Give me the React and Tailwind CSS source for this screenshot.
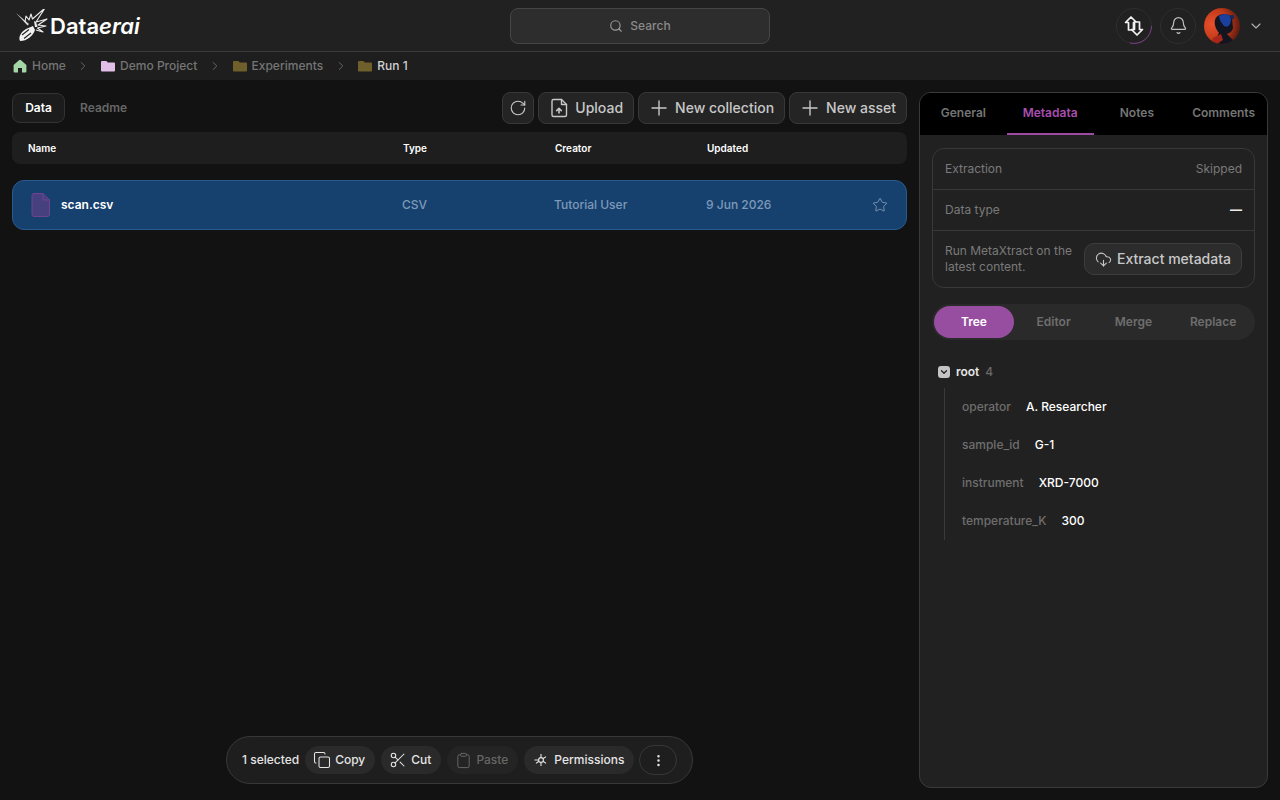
import {
  Bell,
  ChevronDown,
  ChevronRight,
  Clipboard,
  CloudDownload,
  Copy,
  EllipsisVertical,
  Plus,
  RotateCw,
  Scissors,
  Search,
  Star,
} from "lucide-react";

function Logo() {
  return (
    <svg width="34" height="34" viewBox="0 0 34 34" fill="none" className="shrink-0">
      <path d="M0 4 L13 15 L11.5 16.5 Z" fill="#d8d8d8" />
      <path d="M9 13 L10 7 L13 11 L15 5 L16.5 10 L29 -1 L20 13 L31 10 L22 16 L30 17 L21.5 19 L27 23 L20 21" stroke="#ededed" strokeWidth="1.1" strokeLinejoin="round" />
      <path d="M18 12 L20 13 L21.5 18 L19 18 Z" fill="#ededed" />
      <path d="M4 32 C2 28 5 23 10 20 L17 17 L19 21 C17 27 11 32 4 32 Z" fill="#f0f0f0" />
      <path d="M6 26 L13 20.5 M8 29.5 L15 24" stroke="#212121" strokeWidth="1.1" />
    </svg>
  );
}

function SwapIcon() {
  return (
    <svg width="20" height="22" viewBox="0 0 20 22" fill="none" stroke="#f2f2f2" strokeWidth="1.7" strokeLinejoin="round">
      <path d="M7 2 L1.5 7.5 L4.5 7.5 L4.5 15 L9.5 15 L9.5 7.5 L12.5 7.5 Z" />
      <path d="M13 20 L18.5 14.5 L15.5 14.5 L15.5 7 L10.5 7 L10.5 14.5 L7.5 14.5 Z" fill="#212121" />
    </svg>
  );
}

function Avatar() {
  return (
    <svg width="36" height="36" viewBox="0 0 36 36">
      <defs>
        <radialGradient id="bg" cx="22%" cy="45%" r="80%">
          <stop offset="0%" stopColor="#e8502a" />
          <stop offset="55%" stopColor="#c13a1a" />
          <stop offset="100%" stopColor="#5a1a10" />
        </radialGradient>
        <clipPath id="round">
          <circle cx="18" cy="18" r="18" />
        </clipPath>
      </defs>
      <g clipPath="url(#round)">
        <rect width="36" height="36" fill="url(#bg)" />
        <path d="M11 12 C13 5 25 4 28 10 L29 20 C28 24 25 25 23 26 L33 36 L9 36 L15 25 C12 21 10 17 11 12 Z" fill="#12151f" />
        <path d="M15 8 C20 4 28 6 27 13 C26 18 23 20 20 18 C18 15 16 14 15 8 Z" fill="#1a3f9c" />
        <circle cx="28" cy="9" r="2.2" fill="#15295e" />
        <path d="M9 30 L17 26 L19 32 L13 36 L7 36 Z" fill="#a8261a" />
      </g>
    </svg>
  );
}

function PermissionsIcon() {
  return (
    <svg width="18" height="18" viewBox="0 0 18 18" fill="none" stroke="#e5e5e5" strokeWidth="1.1">
      <circle cx="9" cy="9" r="2.4" />
      <path d="M9 6.6 V3 M6.9 10.2 L4 12.4 M11.1 10.2 L14 12.4 M6.6 9 H2.5 M11 7.7 L14 5.6 M9 11.4 V15" />
    </svg>
  );
}

function FolderIcon({ color }) {
  return (
    <svg width="14" height="12" viewBox="0 0 14 12" className="shrink-0">
      <path d="M1 1 H5.4 L6.8 2.5 H13 Q14 2.5 14 3.5 V10.8 Q14 11.5 13 11.5 H1 Q0 11.5 0 10.8 V2 Q0 1 1 1 Z" fill={color} />
    </svg>
  );
}

function UploadIcon() {
  return (
    <svg width="24" height="24" viewBox="0 0 24 24" fill="none" stroke="currentColor" strokeWidth="1.4" strokeLinejoin="round" strokeLinecap="round">
      <path d="M6.5 3.5 H14.5 L19.5 8.5 V19 Q19.5 20.5 18 20.5 H6.5 Q5 20.5 5 19 V5 Q5 3.5 6.5 3.5 Z" />
      <path d="M14.5 3.5 V8.5 H19.5" />
      <path d="M12 17 V13 M9.7 14.6 L12 12.3 L14.3 14.6" strokeWidth="1.6" />
    </svg>
  );
}

function Crumb({ icon, label, current }) {
  return (
    <div className="flex items-center gap-[5px]">
      {icon}
      <span className={current ? "text-[#d0d0d0]" : "text-[#757575]"}>{label}</span>
    </div>
  );
}

function Sep() {
  return <ChevronRight size={14} className="text-[#6f6f6f] mx-[10.6px]" strokeWidth={1.5} />;
}

function ToolButton({ icon, label }) {
  return (
    <button className="h-8 flex items-center gap-1 pl-2 pr-[10px] rounded-lg bg-[#242424] border border-[#383838] text-sm font-medium text-[#c8c8c8]">
      {icon}
      {label}
    </button>
  );
}

function PillButton({ icon, label, disabled }) {
  return (
    <button
      className={
        "h-7 flex items-center gap-1 pl-2 pr-[10px] rounded-full text-xs font-medium " +
        (disabled ? "bg-[#242424] text-[#666666]" : "bg-[#2a2a2a] text-[#e5e5e5]")
      }
    >
      {icon}
      {label}
    </button>
  );
}

const metadata = [
  ["operator", "A. Researcher"],
  ["sample_id", "G-1"],
  ["instrument", "XRD-7000"],
  ["temperature_K", "300"],
];

export default function App() {
  return (
    <div className="relative h-[800px] w-[1280px] overflow-hidden bg-[#121212] font-['Inter',sans-serif] flex flex-col">
      <header className="h-[52px] shrink-0 bg-[#212121] border-b border-[#3a3a3a] flex items-center justify-between pl-4 pr-4">
        <div className="w-[260px] flex items-center">
          <Logo />
          <span className="text-[22px] leading-none font-semibold text-white">
            Data<span className="italic">erai</span>
          </span>
        </div>
        <div className="w-[260px] h-9 rounded-lg bg-[#2d2d2d] border border-[#454545] flex items-center justify-center gap-[7px] text-xs font-medium text-[#8a8a8a]">
          <Search size={14} className="text-[#999999]" />
          Search
        </div>
        <div className="w-[260px] flex items-center justify-end">
          <div className="relative w-9 h-9 rounded-full border border-[#2f2f2f] flex items-center justify-center">
            <svg width="36" height="36" viewBox="0 0 36 36" className="absolute -inset-px" fill="none">
              <path d="M35.5 18 A17.5 17.5 0 0 1 14 35" stroke="#7b3f86" strokeWidth="1" />
            </svg>
            <SwapIcon />
          </div>
          <div className="ml-2 w-9 h-9 rounded-full border border-[#2f2f2f] flex items-center justify-center">
            <Bell size={19} strokeWidth={1.5} className="text-[#c0c0c0]" />
          </div>
          <div className="ml-2">
            <Avatar />
          </div>
          <ChevronDown size={16} strokeWidth={1.75} className="ml-[8px] text-[#b0b0b0]" />
        </div>
      </header>

      <nav className="h-7 shrink-0 bg-[#1e1e1e] flex items-center pl-[13px] text-xs font-medium">
        <Crumb
          label="Home"
          icon={
            <svg width="14" height="14" viewBox="0 0 14 14">
              <path d="M7 .8 Q7.5 .8 8 1.3 L13.4 6 V12.4 Q13.4 13.4 12.4 13.4 H9 V9 H5 V13.4 H1.6 Q.6 13.4 .6 12.4 V6 L6 1.3 Q6.5 .8 7 .8 Z" fill="#a5d6a7" />
            </svg>
          }
        />
        <Sep />
        <Crumb label="Demo Project" icon={<FolderIcon color="#e1bee7" />} />
        <Sep />
        <Crumb label="Experiments" icon={<FolderIcon color="#6f5f2a" />} />
        <Sep />
        <Crumb label="Run 1" current icon={<FolderIcon color="#6f5f2a" />} />
      </nav>

      <main className="flex-1 flex gap-3 px-3 pt-3 pb-3 min-h-0">
        <section className="flex-1 min-w-0">
          <div className="flex items-center justify-between h-8">
            <div className="flex items-center">
              <button className="h-[30px] w-[53px] rounded-lg bg-[#1c1c1c] border border-[#333333] text-xs font-semibold text-white">
                Data
              </button>
              <span className="ml-[15px] text-xs font-semibold text-[#666666]">Readme</span>
            </div>
            <div className="flex items-center gap-1">
              <button className="w-8 h-8 flex items-center justify-center rounded-lg bg-[#242424] border border-[#383838] text-[#c8c8c8]">
                <RotateCw size={18} strokeWidth={1.5} />
              </button>
              <ToolButton icon={<UploadIcon />} label="Upload" />
              <ToolButton icon={<Plus size={24} strokeWidth={1.4} />} label="New collection" />
              <ToolButton icon={<Plus size={24} strokeWidth={1.4} />} label="New asset" />
            </div>
          </div>

          <div className="mt-2 h-8 rounded-lg bg-[#1e1e1e] pl-4 grid grid-cols-[375px_152px_152px_1fr] items-center text-[10px] font-semibold text-white">
            <span>Name</span>
            <span>Type</span>
            <span>Creator</span>
            <span>Updated</span>
          </div>

          <div className="mt-4 h-[50px] rounded-xl bg-[#16416f] border border-[#2a5a8c] pl-[15px] pr-[18px] grid grid-cols-[374px_152px_152px_1fr] items-center text-xs font-medium text-[#7d99b8]">
            <div className="flex items-center gap-[10px]">
              <svg width="20" height="24" viewBox="0 0 20 24" fill="none" className="ml-[3px]">
                <path d="M3 .5 H12 L18.5 7 V21.5 Q18.5 23.5 16.5 23.5 H3 Q1 23.5 1 21.5 V2.5 Q1 .5 3 .5 Z" fill="#46407f" stroke="#6f4292" />
                <path d="M12 .5 V7 H18.5" stroke="#6f4292" />
              </svg>
              <span className="text-white font-semibold">scan.csv</span>
            </div>
            <span>CSV</span>
            <span>Tutorial User</span>
            <div className="flex items-center justify-between">
              <span>9 Jun 2026</span>
              <Star size={16} strokeWidth={1} className="text-[#a0b8d0]" />
            </div>
          </div>
        </section>

        <aside className="w-[349px] shrink-0 rounded-xl bg-[#212121] border border-[#3a3a3a] overflow-hidden flex flex-col">
          <div className="h-[42px] shrink-0 bg-black grid grid-cols-4 text-xs font-semibold text-[#757575]">
            <div className="flex items-center justify-center pb-[2px]">General</div>
            <div className="flex items-center justify-center text-[#a94fb0] border-b-2 border-[#9c4aa3]">Metadata</div>
            <div className="flex items-center justify-center pb-[2px]">Notes</div>
            <div className="flex items-center justify-center pb-[2px] whitespace-nowrap">Comments</div>
          </div>

          <div className="px-3 pt-[13px]">
            <div className="rounded-xl border border-[#383838] text-xs text-[#7a7a7a]">
              <div className="h-[41px] px-3 flex items-center justify-between border-b border-[#383838]">
                <span>Extraction</span>
                <span>Skipped</span>
              </div>
              <div className="h-[41px] px-3 flex items-center justify-between border-b border-[#383838]">
                <span>Data type</span>
                <span className="text-[#eeeeee] font-bold">—</span>
              </div>
              <div className="h-[56px] px-3 flex items-center justify-between">
                <p className="w-[130px] leading-4">Run MetaXtract on the latest content.</p>
                <button className="h-8 w-[158px] flex items-center justify-center gap-[5px] rounded-[10px] bg-[#2c2c2c] border border-[#3d3d3d] text-sm font-medium text-[#c8c8c8]">
                  <CloudDownload size={17} strokeWidth={1.5} />
                  Extract metadata
                </button>
              </div>
            </div>

            <div className="mt-4 h-9 rounded-full bg-[#2a2a2a] p-[2px] grid grid-cols-4 text-xs font-semibold text-[#6e6e6e]">
              <div className="rounded-full bg-[#984ea0] text-white flex items-center justify-center">Tree</div>
              <div className="flex items-center justify-center">Editor</div>
              <div className="flex items-center justify-center">Merge</div>
              <div className="flex items-center justify-center">Replace</div>
            </div>

            <div className="mt-6 pl-[6px]">
              <div className="flex items-center h-4 text-xs">
                <span className="w-3 h-3 rounded-[3px] bg-[#c4c4c4] flex items-center justify-center">
                  <ChevronDown size={10} strokeWidth={3} className="text-[#212121]" />
                </span>
                <span className="ml-[6px] font-semibold text-[#e5e5e5]">root</span>
                <span className="ml-[6px] text-[#6a6a6a] font-medium">4</span>
              </div>
              <div className="mt-2 ml-[6px] border-l border-[#3a3a3a] pl-[17px]">
                {metadata.map(([key, value]) => (
                  <div key={key} className="h-[38px] flex items-center gap-[15px] text-xs">
                    <span className="text-[#6e6e6e] font-medium">{key}</span>
                    <span className="text-white font-medium">{value}</span>
                  </div>
                ))}
              </div>
            </div>
          </div>
        </aside>
      </main>

      <div className="absolute left-[226px] top-[736px] w-[467px] h-12 rounded-full bg-[#1e1e1e] border border-[#383838] flex items-center pl-[15px] gap-[6px] text-xs font-medium text-[#e5e5e5]">
        <span>1 selected</span>
        <PillButton icon={<Copy size={18} strokeWidth={1.4} />} label="Copy" />
        <PillButton icon={<Scissors size={18} strokeWidth={1.4} />} label="Cut" />
        <PillButton disabled icon={<Clipboard size={17} strokeWidth={1.4} />} label="Paste" />
        <PillButton icon={<PermissionsIcon />} label="Permissions" />
        <button className="w-[38px] h-[30px] rounded-full border border-[#383838] -ml-[1px] flex items-center justify-center">
          <EllipsisVertical size={15} />
        </button>
      </div>
    </div>
  );
}
